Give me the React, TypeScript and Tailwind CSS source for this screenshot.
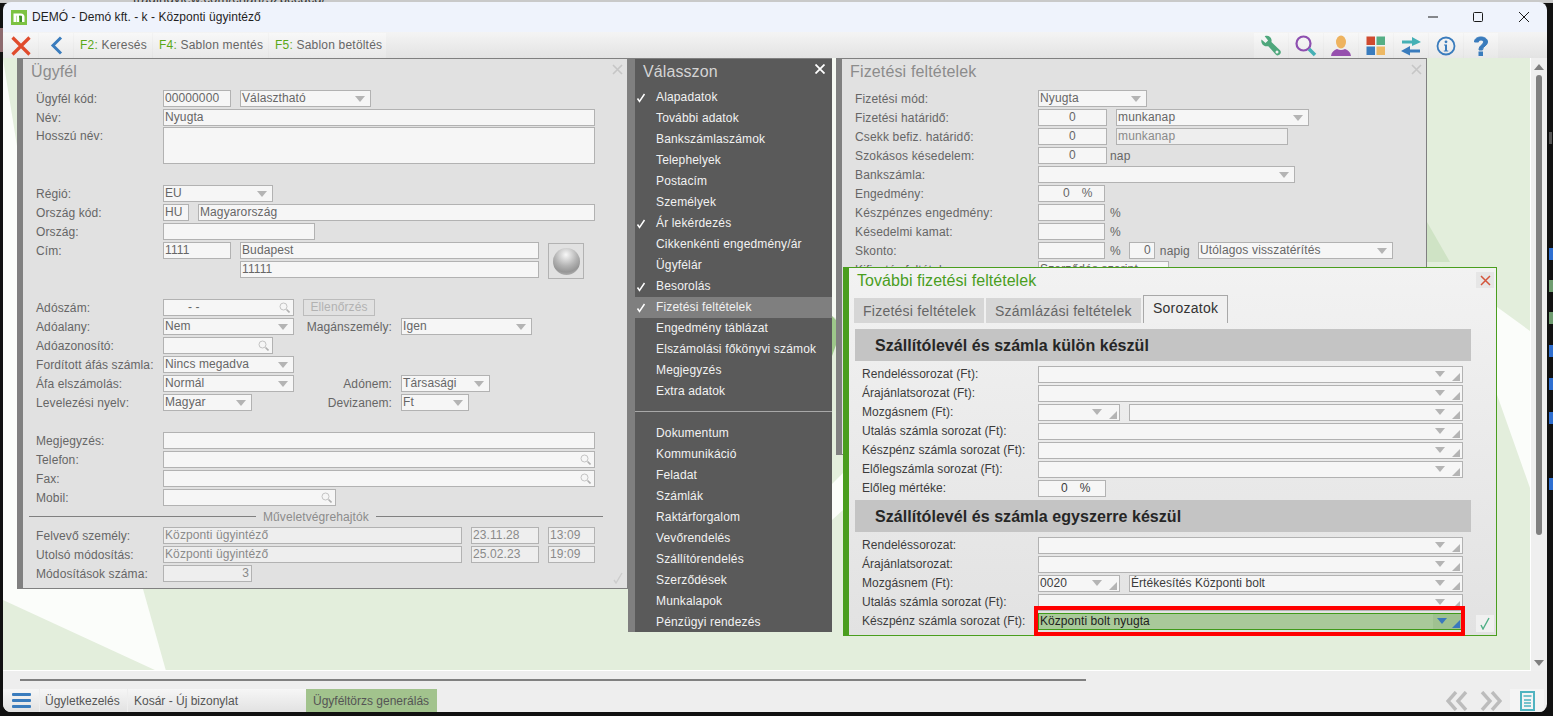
import React from 'react';

const Tri = ({ className = 'fill-[#b4b4b4]' }: { className?: string }) => (
  <svg width="10" height="6" viewBox="0 0 10 6" className={className}>
    <path d="M0 0h10L5 6z" />
  </svg>
);

const Corner = ({ className = 'fill-[#b4b4b4]' }: { className?: string }) => (
  <svg width="8" height="8" viewBox="0 0 8 8" className={className}>
    <path d="M8 0v8H0z" />
  </svg>
);

const Lens = () => (
  <svg width="11" height="11" viewBox="0 0 11 11" fill="none" className="absolute right-[3px] top-[2px]">
    <circle cx="4.5" cy="4.5" r="3.5" stroke="#c4c4c4" strokeWidth="1" />
    <path d="M7.5 7.5l3 3" stroke="#b0b0b0" strokeWidth="1.6" />
  </svg>
);

type FieldProps = {
  className: string;
  children?: React.ReactNode;
  arrow?: boolean;
  combo?: boolean;
  search?: boolean;
  dim?: boolean;
  align?: string;
};

const Field = ({ className, children, arrow, combo, search, dim, align = 'text-left' }: FieldProps) => (
  <div
    className={`relative h-[17px] shrink-0 overflow-hidden whitespace-nowrap border border-[#b2b2b2] px-[1px] leading-[15px] ${
      dim ? 'bg-[#eeeeee] text-[#8a8a8a]' : 'bg-[#f6f6f6]'
    } ${align} ${className}`}
  >
    {children}
    {arrow && (
      <span className="absolute right-[5px] top-[5px] flex">
        <Tri />
      </span>
    )}
    {combo && (
      <>
        <span className="absolute right-[17px] top-[4px] flex">
          <Tri />
        </span>
        <span className="absolute right-[2px] top-[6px] flex">
          <Corner />
        </span>
      </>
    )}
    {search && <Lens />}
  </div>
);

const Row = ({ label, lw, children }: { label?: string; lw: string; children?: React.ReactNode }) => (
  <div className="flex h-[19px] items-center gap-[9px]">
    <span className={`shrink-0 whitespace-nowrap ${lw}`}>{label}</span>
    {children}
  </div>
);

const SideLabel = ({ className, children }: { className: string; children: string }) => (
  <span className={`shrink-0 whitespace-nowrap text-right ${className}`}>{children}</span>
);

const PanelClose = () => (
  <svg width="11" height="11" viewBox="0 0 11 11" className="absolute right-[4px] top-[5px] stroke-[#c6c6c6]" strokeWidth="1.6">
    <path d="M1 1l9 9M10 1l-9 9" />
  </svg>
);

const CustomerPanel = () => {
  const lw = 'w-[118px]';
  return (
    <section className="absolute left-[14px] top-0 h-[531px] w-[611px] border border-l-[6px] border-[#808080] bg-[#e1e1e1] pl-[13px] tracking-[0.1px] text-[#666666]">
      <PanelClose />
      <h2 className="-ml-[5px] h-[30px] text-[16px] leading-[26px] text-[#8c8c8c]">Ügyfél</h2>
      <Row label="Ügyfél kód:" lw={lw}>
        <Field className="w-[68px]">00000000</Field>
        <Field className="w-[131px]" arrow>Választható</Field>
      </Row>
      <Row label="Név:" lw={lw}>
        <Field className="w-[432px]">Nyugta</Field>
      </Row>
      <div className="flex h-[57px] items-start gap-[9px]">
        <span className="w-[118px] leading-[19px]">Hosszú név:</span>
        <Field className="!h-[37px] w-[432px]" />
      </div>
      <Row label="Régió:" lw={lw}>
        <Field className="w-[110px]" arrow>EU</Field>
      </Row>
      <Row label="Ország kód:" lw={lw}>
        <Field className="w-[26px]">HU</Field>
        <Field className="w-[397px]">Magyarország</Field>
      </Row>
      <Row label="Ország:" lw={lw}>
        <Field className="w-[152px]" />
      </Row>
      <div className="flex items-start gap-[9px]">
        <div>
          <Row label="Cím:" lw={lw}>
            <Field className="w-[68px]">1111</Field>
            <Field className="w-[299px]">Budapest</Field>
          </Row>
          <Row lw={lw}>
            <span className="w-[68px] shrink-0" />
            <Field className="w-[299px]">11111</Field>
          </Row>
        </div>
        <div className="mt-[2px] flex h-[36px] w-[36px] items-center justify-center border border-[#b2b2b2]">
          <div className="h-[27px] w-[27px] rounded-full bg-[radial-gradient(circle_at_48%_25%,#f8f8f8,#b4b4b4_45%,#969696_70%,#cccccc)]" />
        </div>
      </div>
      <div className="h-[19px]" />
      <Row label="Adószám:" lw={lw}>
        <Field className="w-[131px] pl-[24px]" search>- -</Field>
        <div className="h-[17px] w-[72px] border border-[#bcbcbc] text-center leading-[15px] text-[#b2b2b2]">Ellenőrzés</div>
      </Row>
      <Row label="Adóalany:" lw={lw}>
        <Field className="w-[131px]" arrow>Nem</Field>
        <SideLabel className="w-[89px]">Magánszemély:</SideLabel>
        <Field className="w-[131px]" arrow>Igen</Field>
      </Row>
      <Row label="Adóazonosító:" lw={lw}>
        <Field className="w-[110px]" search />
      </Row>
      <Row label="Fordított áfás számla:" lw={lw}>
        <Field className="w-[131px]" arrow>Nincs megadva</Field>
      </Row>
      <Row label="Áfa elszámolás:" lw={lw}>
        <Field className="w-[131px]" arrow>Normál</Field>
        <SideLabel className="w-[89px]">Adónem:</SideLabel>
        <Field className="w-[89px]" arrow>Társasági</Field>
      </Row>
      <Row label="Levelezési nyelv:" lw={lw}>
        <Field className="w-[89px]" arrow>Magyar</Field>
        <SideLabel className="w-[131px]">Devizanem:</SideLabel>
        <Field className="w-[68px]" arrow>Ft</Field>
      </Row>
      <div className="h-[19px]" />
      <Row label="Megjegyzés:" lw={lw}>
        <Field className="w-[432px]" />
      </Row>
      <Row label="Telefon:" lw={lw}>
        <Field className="w-[432px]" search />
      </Row>
      <Row label="Fax:" lw={lw}>
        <Field className="w-[432px]" search />
      </Row>
      <Row label="Mobil:" lw={lw}>
        <Field className="w-[173px]" search />
      </Row>
      <div className="-ml-[7px] flex h-[19px] w-[574px] items-center gap-[7px] text-[#8c8c8c]">
        <span className="h-[1px] w-[227px] bg-[#808080]" />
        <span>Műveletvégrehajtók</span>
        <span className="h-[1px] flex-1 bg-[#808080]" />
      </div>
      <Row label="Felvevő személy:" lw={lw}>
        <Field className="w-[299px]" dim>Központi ügyintéző</Field>
        <Field className="w-[68px]" dim>23.11.28</Field>
        <Field className="w-[47px]" dim>13:09</Field>
      </Row>
      <Row label="Utolsó módosítás:" lw={lw}>
        <Field className="w-[299px]" dim>Központi ügyintéző</Field>
        <Field className="w-[68px]" dim>25.02.23</Field>
        <Field className="w-[47px]" dim>19:09</Field>
      </Row>
      <Row label="Módosítások száma:" lw={lw}>
        <Field className="w-[89px] pr-[2px]" dim align="text-right">3</Field>
      </Row>
      <svg width="12" height="12" viewBox="0 0 12 12" fill="none" className="absolute bottom-[4px] right-[3px] stroke-[#cdcdcd]" strokeWidth="1.4">
        <path d="M2 8l2 3 6-10" />
      </svg>
    </section>
  );
};

const menuTop = [
  { name: 'Alapadatok', on: true },
  { name: 'További adatok' },
  { name: 'Bankszámlaszámok' },
  { name: 'Telephelyek' },
  { name: 'Postacím' },
  { name: 'Személyek' },
  { name: 'Ár lekérdezés', on: true },
  { name: 'Cikkenkénti engedmény/ár' },
  { name: 'Ügyfélár' },
  { name: 'Besorolás', on: true },
  { name: 'Fizetési feltételek', on: true, active: true },
  { name: 'Engedmény táblázat' },
  { name: 'Elszámolási főkönyvi számok' },
  { name: 'Megjegyzés' },
  { name: 'Extra adatok' },
];

const menuBottom = [
  'Dokumentum',
  'Kommunikáció',
  'Feladat',
  'Számlák',
  'Raktárforgalom',
  'Vevőrendelés',
  'Szállítórendelés',
  'Szerződések',
  'Munkalapok',
  'Pénzügyi rendezés',
];

const MenuItem = ({ name, on, active }: { name: string; on?: boolean; active?: boolean }) => (
  <div className={`relative h-[21px] pl-[21px] leading-[20px] ${active ? 'bg-[#7f7f7f]' : ''}`}>
    {on && (
      <svg width="10" height="10" viewBox="0 0 10 10" fill="none" className="absolute left-[1px] top-[6px] stroke-white" strokeWidth="1.5">
        <path d="M1.5 5.5L3.5 8.500 8.500 1" />
      </svg>
    )}
    {name}
  </div>
);

const ChooserPanel = () => (
  <section className="absolute left-[625px] top-0 h-[574px] w-[204px] overflow-hidden border-l-[7px] border-t border-[#7f7f7f] bg-[#5a5a5a] text-[#f2f2f2]">
    <h2 className="h-[28px] pl-[8px] text-[16px] leading-[26px] tracking-[0.1px] text-[#d4d4d4]">Válasszon</h2>
    <svg width="10" height="10" viewBox="0 0 10 10" className="absolute right-[7px] top-[5px] stroke-white" strokeWidth="1.8">
      <path d="M0.5 0.5l9 9M9.5 0.5l-9 9" />
    </svg>
    {menuTop.map((item) => (
      <MenuItem key={item.name} {...item} />
    ))}
    <div className="mb-[11px] mt-[9px] h-[1px] bg-[#a8a8a8]" />
    {menuBottom.map((name) => (
      <MenuItem key={name} name={name} />
    ))}
  </section>
);

const PaymentPanel = () => {
  const lw = 'w-[174px]';
  return (
    <section className="absolute left-[833px] top-0 h-[397px] w-[591px] overflow-hidden border border-l-[6px] border-[#808080] bg-[#e1e1e1] pl-[13px] text-[#666666]">
      <PanelClose />
      <h2 className="-ml-[5px] h-[30px] text-[16px] leading-[26px] text-[#8c8c8c]">Fizetési feltételek</h2>
      <Row label="Fizetési mód:" lw={lw}>
        <Field className="w-[109px]" arrow>Nyugta</Field>
      </Row>
      <Row label="Fizetési határidő:" lw={lw}>
        <Field className="w-[69px]" align="text-center">0</Field>
        <Field className="w-[193px]" arrow>munkanap</Field>
      </Row>
      <Row label="Csekk befiz. határidő:" lw={lw}>
        <Field className="w-[69px]" align="text-center">0</Field>
        <Field className="w-[172px]" dim>munkanap</Field>
      </Row>
      <Row label="Szokásos késedelem:" lw={lw}>
        <Field className="w-[69px]" align="text-center">0</Field>
        <span className="-ml-[6px]">nap</span>
      </Row>
      <Row label="Bankszámla:" lw={lw}>
        <Field className="w-[257px]" arrow />
      </Row>
      <Row label="Engedmény:" lw={lw}>
        <Field className="w-[67px] pl-[24px]">0<span className="ml-[12px]">%</span></Field>
      </Row>
      <Row label="Készpénzes engedmény:" lw={lw}>
        <Field className="w-[67px]" />
        <span className="-ml-[4px]">%</span>
      </Row>
      <Row label="Késedelmi kamat:" lw={lw}>
        <Field className="w-[67px]" />
        <span className="-ml-[4px]">%</span>
      </Row>
      <Row label="Skonto:" lw={lw}>
        <Field className="w-[67px]" />
        <span className="-ml-[4px]">%</span>
        <Field className="-ml-[1px] w-[26px] pr-[3px]" align="text-right">0</Field>
        <span className="-ml-[4px]">napig</span>
        <Field className="-ml-[1px] w-[195px]" arrow>Utólagos visszatérítés</Field>
      </Row>
      <Row label="Kifizetés feltétele:" lw={lw}>
        <Field className="w-[131px]">Szerződés szerint</Field>
      </Row>
    </section>
  );
};

const SectionHead = ({ children }: { children: string }) => (
  <div className="ml-[6px] h-[32px] w-[616px] bg-[#c4c4c4] pl-[20px] text-[16px] font-bold leading-[33px] text-[#262626]">{children}</div>
);

const MoreTermsPanel = () => {
  const lw = 'w-[167px] -mt-[2px]';
  return (
    <section className="absolute left-[840px] top-[209px] h-[369px] w-[654px] border border-l-[6px] border-[#4a9e1e] bg-[linear-gradient(#f2f2f2,#e2e2e2)] tracking-[0.05px] text-[#3c3c3c]">
      <h2 className="h-[27px] pl-[8px] text-[16px] leading-[26px] text-[#4a9e1e]">További fizetési feltételek</h2>
      <div className="absolute right-[2px] top-[4px] flex h-[16px] w-[18px] items-center justify-center bg-[#e6e6e6]">
        <svg width="11" height="11" viewBox="0 0 11 11" className="stroke-[#d4553c]" strokeWidth="1.5">
          <path d="M1 1l9 9M10 1l-9 9" />
        </svg>
      </div>
      <div className="ml-[5px] flex h-[28px] items-end gap-[2px] text-[14px] tracking-[0.25px]">
        <div className="h-[25px] w-[130px] bg-[#d6d6d6] pl-[9px] leading-[26px] text-[#666666]">Fizetési feltételek</div>
        <div className="h-[25px] w-[155px] bg-[#d6d6d6] pl-[9px] leading-[26px] text-[#666666]">Számlázási feltételek</div>
        <div className="h-[28px] w-[85px] border border-b-0 border-[#a8a8a8] bg-[#f0f0f0] pl-[9px] leading-[25px] text-[#333333]">Sorozatok</div>
      </div>
      <div className="h-[6px]" />
      <SectionHead>Szállítólevél és számla külön készül</SectionHead>
      <div className="pl-[13px] pt-[4px]">
        <Row label="Rendeléssorozat (Ft):" lw={lw}>
          <Field className="w-[425px]" combo />
        </Row>
        <Row label="Árajánlatsorozat (Ft):" lw={lw}>
          <Field className="w-[425px]" combo />
        </Row>
        <Row label="Mozgásnem (Ft):" lw={lw}>
          <Field className="w-[82px]" combo />
          <Field className="w-[334px]" combo />
        </Row>
        <Row label="Utalás számla sorozat (Ft):" lw={lw}>
          <Field className="w-[425px]" combo />
        </Row>
        <Row label="Készpénz számla sorozat (Ft):" lw={lw}>
          <Field className="w-[425px]" combo />
        </Row>
        <Row label="Előlegszámla sorozat (Ft):" lw={lw}>
          <Field className="w-[425px]" combo />
        </Row>
        <Row label="Előleg mértéke:" lw={lw}>
          <Field className="w-[68px] pl-[22px]">0<span className="ml-[12px]">%</span></Field>
        </Row>
      </div>
      <div className="h-[2px]" />
      <SectionHead>Szállítólevél és számla egyszerre készül</SectionHead>
      <div className="pl-[13px] pt-[4px]">
        <Row label="Rendeléssorozat:" lw={lw}>
          <Field className="w-[425px]" combo />
        </Row>
        <Row label="Árajánlatsorozat:" lw={lw}>
          <Field className="w-[425px]" combo />
        </Row>
        <Row label="Mozgásnem (Ft):" lw={lw}>
          <Field className="w-[82px]" combo>0020</Field>
          <Field className="w-[334px]" combo>Értékesítés Központi bolt</Field>
        </Row>
        <Row label="Utalás számla sorozat (Ft):" lw={lw}>
          <Field className="w-[425px]" combo />
        </Row>
        <Row label="Készpénz számla sorozat (Ft):" lw={lw}>
          <div className="relative h-[17px] w-[425px] border border-[#3f9a1a] bg-[#a9c99a] px-[1px] leading-[15px] text-[#1e1e1e]">
            Központi bolt nyugta
            <div className="absolute bottom-0 right-0 top-0 flex w-[29px] items-start bg-[#9fc190]">
              <span className="absolute left-[4px] top-[4px] flex"><Tri className="fill-[#3a78bd]" /></span>
              <span className="absolute right-[2px] top-[6px] flex"><Corner className="fill-[#3a78bd]" /></span>
            </div>
          </div>
        </Row>
      </div>
      <div className="absolute bottom-[3px] right-[2px] flex h-[17px] w-[18px] items-center justify-center bg-[#f0f0f0]">
        <svg width="12" height="13" viewBox="0 0 12 13" fill="none" className="stroke-[#4fae86]" strokeWidth="1.4">
          <path d="M2 8l2 4 6-11" />
        </svg>
      </div>
    </section>
  );
};

const ToolBtn = ({ children, className }: { children: React.ReactNode; className: string }) => (
  <div className={`flex h-[25px] items-center justify-center bg-[linear-gradient(#f8f8f8,#e8e8e8)] ${className}`}>{children}</div>
);

const FKey = ({ k, text, className }: { k: string; text: string; className: string }) => (
  <ToolBtn className={`!justify-start pb-[2px] pl-[6px] ${className}`}>
    <span className="whitespace-nowrap tracking-[0.2px] text-[#666666]">
      <span className="text-[#5aa816]">{k}</span> {text}
    </span>
  </ToolBtn>
);

const RightTools = () => (
  <div className="ml-auto mr-[49px] flex gap-[1px]">
    <ToolBtn className="w-[34px]">
      <svg width="22" height="22" viewBox="0 0 22 22">
        <path d="M1.5 4.5l4 3.5 2.6-2.6-3.4-4.2c3-1.4 6.6.4 6.9 4 0 .8 0 1.3-.2 1.9l8.600 8.200c1.400 1.500.9 3.300-.3 4.300-1.100 1-2.800 1.200-4-.2L8.300 11.200c-.6.2-1.300.2-2 .1C3 11 .6 8 1.500 4.500z" fill="#4ea77c" />
        <circle cx="17" cy="17" r="1.500" fill="#f2f2f2" />
      </svg>
    </ToolBtn>
    <ToolBtn className="w-[34px]">
      <svg width="22" height="22" viewBox="0 0 22 22" fill="none">
        <circle cx="8.500" cy="8.500" r="7" stroke="#8e4fb0" strokeWidth="2.200" />
        <path d="M14 14l6 6" stroke="#45b0b5" strokeWidth="3.600" />
      </svg>
    </ToolBtn>
    <ToolBtn className="w-[34px]">
      <svg width="22" height="22" viewBox="0 0 22 22">
        <ellipse cx="11" cy="7" rx="5" ry="6.500" fill="#eeb35f" />
        <path d="M1 21c.5-4 3-6 6-7 2.500 1.300 5.500 1.300 8 0 3 1 5.500 3 6 7z" fill="#9650ae" />
      </svg>
    </ToolBtn>
    <ToolBtn className="w-[34px]">
      <svg width="20" height="20" viewBox="0 0 20 20">
        <rect x="0.500" y="0.500" width="8.500" height="8.500" fill="#cf4a2f" />
        <rect x="10.500" y="0.500" width="8.500" height="8.500" fill="#55ae85" />
        <rect x="0.500" y="10.500" width="8.500" height="8.500" fill="#3a7cbd" />
        <rect x="10.500" y="10.500" width="8.500" height="8.500" fill="#edb864" />
      </svg>
    </ToolBtn>
    <ToolBtn className="w-[34px]">
      <svg width="22" height="20" viewBox="0 0 22 20">
        <path d="M2 4.500h10V1l9 5-9 4V7.500H2z" fill="#45b0b5" />
        <path d="M20 13.500H10V10l-9 5 9 4.500V16.500h10z" fill="#3a7cbd" />
      </svg>
    </ToolBtn>
    <ToolBtn className="w-[34px]">
      <svg width="20" height="20" viewBox="0 0 20 20" fill="none">
        <circle cx="10" cy="10" r="8.500" stroke="#3a7cbd" strokeWidth="1.800" />
        <circle cx="10" cy="5.800" r="1.400" fill="#3a7cbd" />
        <path d="M8 8.500h3v6h1.200v1H7.800v-1H9v-5H8z" fill="#3a7cbd" />
      </svg>
    </ToolBtn>
    <ToolBtn className="w-[34px]">
      <svg width="18" height="22" viewBox="0 0 18 22" fill="none">
        <path d="M2.500 7c0-3.500 3-5 6.500-5s6.500 1.800 6.500 5c0 4-5 4-5 8H7c0-5 4.500-5 4.500-8 0-1.300-1.100-2-2.500-2S6.500 5.800 6.500 7z" fill="#3a7cbd" stroke="#3a7cbd" />
        <rect x="6.500" y="16.500" width="4.500" height="4.500" fill="#3a7cbd" />
      </svg>
    </ToolBtn>
  </div>
);

const Scrollbar = () => (
  <div className="flex w-[16px] shrink-0 flex-col items-center bg-[#efefef] pt-[6px]">
    <svg width="10" height="6" viewBox="0 0 10 6" className="fill-[#808080]">
      <path d="M0 6h10L5 0z" />
    </svg>
    <div className="mt-[5px] h-[460px] w-[6px] rounded-[3px] bg-[#808080]" />
    <svg width="10" height="6" viewBox="0 0 10 6" className="mt-[125px] fill-[#808080]">
      <path d="M0 0h10L5 6z" />
    </svg>
  </div>
);

const Desktop = () => (
  <div className="relative h-[613px] w-[1528px] shrink-0 overflow-hidden border-b border-r border-white bg-[#e3eedc]">
    <svg width="1527" height="612" viewBox="3 58 1527 612" className="absolute left-0 top-0">
      <polygon points="3,59 17,146 17,589 143,589 166,671 157,671 3,600" fill="#fbfdfa" />
      <polygon points="1435,262 1530,331 1530,488 1455,276" fill="#fbfdfa" />
      <polygon points="1427,222 1450,262 1427,262" fill="#cfe3c5" />
      <polygon points="832,58 836,58 836,318 832,316" fill="#f6faf3" />
      <polygon points="832,316 836,320 836,345 832,356" fill="#9dc78a" />
      <polygon points="832,484 843,473 843,510 832,520" fill="#fbfdfa" />
    </svg>
    <CustomerPanel />
    <ChooserPanel />
    <PaymentPanel />
    <MoreTermsPanel />
    <div className="absolute left-[1031px] top-[548px] h-[30px] w-[431px] border-[4px] border-[#ff0000]" />
  </div>
);

const BottomBar = () => (
  <div className="h-[41px] bg-[#eeeeee] tracking-normal">
    <div className="ml-[17px] mt-[8px] h-[2px] w-[1066px] bg-[#808080]" />
    <div className="mt-[8px] flex h-[23px] items-stretch">
      <div className="flex w-[36px] flex-col items-center justify-center gap-[3px] bg-[linear-gradient(#f6f6f6,#e2e2e2)] pl-[1px]">
        <span className="h-[3px] w-[19px] rounded-[1px] bg-[#3a7cbd]" />
        <span className="h-[3px] w-[19px] rounded-[1px] bg-[#3a7cbd]" />
        <span className="h-[3px] w-[19px] rounded-[1px] bg-[#3a7cbd]" />
      </div>
      <div className="ml-[1px] w-[87px] bg-[linear-gradient(#f6f6f6,#e2e2e2)] pl-[5px] leading-[24px] text-[#555555]">Ügyletkezelés</div>
      <div className="ml-[1px] w-[178px] bg-[linear-gradient(#f6f6f6,#e2e2e2)] pl-[6px] leading-[24px] text-[#555555]">Kosár - Új bizonylat</div>
      <div className="w-[131px] bg-[#a2c38d] pl-[7px] leading-[24px] text-[#555555]">Ügyféltörzs generálás</div>
      <div className="ml-auto mr-[3px] flex items-center gap-[12px]">
        <svg width="22" height="20" viewBox="0 0 22 20" fill="none" stroke="#bcbcbc" strokeWidth="3.400">
          <path d="M10 1L2 10l8 9M20 1l-8 9 8 9" />
        </svg>
        <svg width="22" height="20" viewBox="0 0 22 20" fill="none" stroke="#bcbcbc" strokeWidth="3.400">
          <path d="M2 1l8 9-8 9M12 1l8 9-8 9" />
        </svg>
        <div className="-ml-[4px] flex h-[23px] w-[34px] items-center justify-center bg-[#f4f4f4]">
          <svg width="15" height="20" viewBox="0 0 15 20" fill="none" stroke="#4fb3c0">
            <rect x="1" y="1" width="13" height="18" strokeWidth="2" />
            <path d="M3.500 5h8M4 9h7M4 12h7M4 15h7" strokeWidth="1.500" />
          </svg>
        </div>
      </div>
    </div>
  </div>
);

const OuterMarks = () => (
  <div className="absolute left-[1549px] top-[130px] flex h-[360px] w-[4px] flex-col">
    <span className="mt-[2px] h-[12px] w-[3px] bg-[#555555]" />
    <span className="mt-[104px] h-[12px] w-[4px] bg-[#2f6fd0]" />
    <span className="mt-[20px] h-[12px] w-[4px] bg-[#6f9c70]" />
    <span className="mt-[20px] h-[12px] w-[4px] bg-[#6f9c70]" />
    <span className="mt-[21px] h-[12px] w-[4px] bg-[#2f6fd0]" />
    <span className="mt-[21px] h-[12px] w-[4px] bg-[#2f6fd0]" />
    <span className="mt-[22px] h-[12px] w-[4px] bg-[#2f6fd0]" />
    <span className="mt-[54px] h-[12px] w-[4px] bg-[#2f6fd0]" />
  </div>
);

const App: React.FC = () => (
  <div className="relative h-[716px] w-[1553px] overflow-hidden bg-[#111111] font-['Liberation_Sans',Arial,sans-serif] text-[12px] tracking-[0.15px]">
    <div className="absolute left-0 top-0 h-[3px] w-full overflow-hidden bg-[#c9c9c9]">
      <span className="absolute left-[133px] top-[-11px] whitespace-nowrap text-[13px] text-[#333333]">tradingview.com/chart/3zbccdcd/</span>
    </div>
    <div className="absolute left-0 top-[28px] h-[24px] w-[3px] bg-[#8d6a6e]" />
    <OuterMarks />
    <div className="relative ml-[3px] flex h-[712px] w-[1544px] flex-col overflow-hidden rounded-[8px] pt-[2px]">
      <div className="flex h-[30px] shrink-0 items-center rounded-t-[8px] bg-[#eff3fc] text-[#1f1f1f]">
        <svg width="16" height="15" viewBox="0 0 16 15" className="ml-[8px]">
          <rect width="16" height="15" fill="#7cc242" />
          <path d="M2.500 12V3.500h7.500c2 0 3.500 1.300 3.500 3.300V12H11V7c0-.7-.5-1.200-1.200-1.200H8V12H5.500V5.800H5V12z" fill="#ffffff" />
          <path d="M8 5.800h1.800c.7 0 1.200.5 1.200 1.200v5H8.800V7.500H8z" fill="#3f8f2a" />
        </svg>
        <span className="ml-[5px] tracking-[0.05px]">DEMÓ - Demó kft. - k - Központi ügyintéző</span>
        <div className="ml-auto flex items-center">
          <svg width="12" height="12" viewBox="0 0 12 12" className="stroke-[#1a1a1a]"><path d="M1 6h10" /></svg>
          <svg width="12" height="12" viewBox="0 0 12 12" fill="none" className="ml-[33px] stroke-[#1a1a1a]"><rect x="1.500" y="1.500" width="9" height="9" rx="1" /></svg>
          <svg width="12" height="12" viewBox="0 0 12 12" className="ml-[34px] mr-[17px] stroke-[#1a1a1a]"><path d="M1 1l10 10M11 1L1 11" /></svg>
        </div>
      </div>
      <div className="flex h-[26px] shrink-0 items-end gap-[1px] bg-[linear-gradient(#f4f4f4,#e3e3e3)] text-[12px]">
        <ToolBtn className="w-[35px]">
          <svg width="20" height="20" viewBox="0 0 20 20" stroke="#e04b2c" strokeWidth="3.200">
            <path d="M1.500 1.500l17 17M18.500 1.500l-17 17" />
          </svg>
        </ToolBtn>
        <ToolBtn className="w-[34px]">
          <svg width="13" height="19" viewBox="0 0 13 19" fill="none" stroke="#3a7cbd" strokeWidth="3">
            <path d="M11 1.500L3 9.500l8 8" />
          </svg>
        </ToolBtn>
        <FKey k="F2:" text="Keresés" className="w-[78px]" />
        <FKey k="F4:" text="Sablon mentés" className="w-[115px]" />
        <FKey k="F5:" text="Sablon betöltés" className="w-[117px]" />
        <RightTools />
      </div>
      <div className="flex shrink-0">
        <Desktop />
        <Scrollbar />
      </div>
      <BottomBar />
    </div>
  </div>
);

export default App;
